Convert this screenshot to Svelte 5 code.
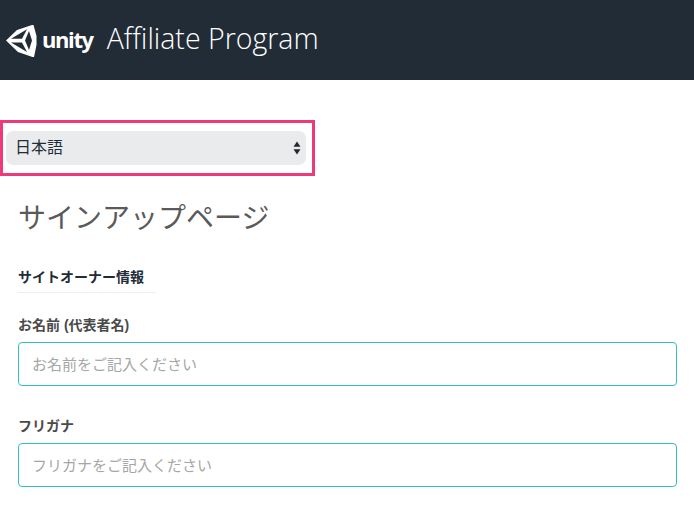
<script>
  let lang = $state('ja');
</script>

<header class="top">
  <div class="logo">
    <svg class="cube" viewBox="6 24 31 34" width="31" height="34" aria-hidden="true">
      <path fill="#fff" fill-rule="evenodd" d="M6 40.5 L17 30 L32 25 L33.5 25 L36.5 36 L36.5 45 L34 57 L32.5 57 L18 52 Z M11 38.7 L22 38.7 L27 29.2 Z M11 42.5 L27 52 L22 42.5 Z M29 31 L25 40.5 L29 50 L32 40.5 Z"/>
    </svg>
    <span class="word">unity</span>
  </div>
  <span class="title">Affiliate Program</span>
</header>

<main class="page">
  <div class="lang">
    <div class="select-wrap">
      <select bind:value={lang} aria-label="言語">
        <option value="ja">日本語</option>
        <option value="en">English</option>
      </select>
      <svg class="arrows" viewBox="0 0 8 14" width="8" height="14" aria-hidden="true">
        <path fill="#23282e" d="M4 0.5 L7.5 5.8 H0.5 Z M4 13.5 L0.5 8.2 H7.5 Z"/>
      </svg>
    </div>
  </div>

  <form class="form">
    <h1>サインアップページ</h1>
    <h2>サイトオーナー情報</h2>
    <label class="field">
      <span>お名前 (代表者名)</span>
      <input type="text" placeholder="お名前をご記入ください" />
    </label>
    <label class="field">
      <span>フリガナ</span>
      <input type="text" placeholder="フリガナをご記入ください" />
    </label>
  </form>
</main>

<style>
  :global(body) {
    margin: 0;
    background: #fff;
    overflow: hidden;
    font-family: "Liberation Sans", "Noto Sans CJK JP", sans-serif;
  }
  .top {
    height: 80px;
    background: #222c37;
    display: flex;
    align-items: center;
    box-sizing: border-box;
    padding-left: 6px;
    color: #fff;
  }
  .logo {
    display: flex;
    align-items: center;
    gap: 5px;
    margin-top: 2px;
  }
  .cube {
    display: block;
  }
  .word {
    font-family: "Open Sans", sans-serif;
    font-weight: 700;
    font-size: 22px;
    line-height: 30px;
    letter-spacing: -1.4px;
    margin-top: -5px;
  }
  .title {
    font-family: "Open Sans", sans-serif;
    font-weight: 300;
    font-size: 28.5px;
    margin-left: 14px;
    margin-bottom: 5px;
    line-height: 36px;
  }
  .page {
    padding-top: 40px;
  }
  .lang {
    box-sizing: border-box;
    width: 315px;
    height: 56px;
    border: 3px solid #ee3a7a;
    padding: 8px 6px 0 3px;
  }
  .select-wrap {
    position: relative;
    height: 34px;
  }
  select {
    appearance: none;
    display: block;
    width: 100%;
    height: 34px;
    border: 0;
    border-radius: 7px;
    background: #e9ebed;
    color: #222c37;
    font-family: "Liberation Sans", "Noto Sans CJK JP", sans-serif;
    font-size: 16px;
    padding: 0 9px 2px;
  }
  .arrows {
    position: absolute;
    right: 5px;
    top: 10px;
    pointer-events: none;
  }
  .form {
    padding: 0 17px 0 18px;
  }
  h1 {
    margin: 23px 0 0;
    font-size: 28px;
    font-weight: 400;
    line-height: 40px;
    color: #5a5a5a;
  }
  h2 {
    margin: 28px 0 0;
    width: 138px;
    height: 26px;
    box-sizing: border-box;
    border-bottom: 1px solid #eceeef;
    font-size: 14px;
    font-weight: 700;
    line-height: 20px;
    color: #222c37;
  }
  .field {
    display: block;
    margin-top: 22px;
  }
  .field + .field {
    margin-top: 30px;
  }
  .field span {
    display: block;
    font-size: 14px;
    font-weight: 700;
    line-height: 20px;
    color: #4a4a4a;
    margin-bottom: 7px;
  }
  input {
    display: block;
    box-sizing: border-box;
    width: 100%;
    height: 44px;
    border: 1px solid #33bfc4;
    border-radius: 4px;
    padding: 0 13px;
    background: #fff;
    font-family: "Liberation Sans", "Noto Sans CJK JP", sans-serif;
    font-size: 15px;
    outline: none;
  }
  input::placeholder {
    color: #a6a6a6;
    opacity: 1;
  }
</style>
